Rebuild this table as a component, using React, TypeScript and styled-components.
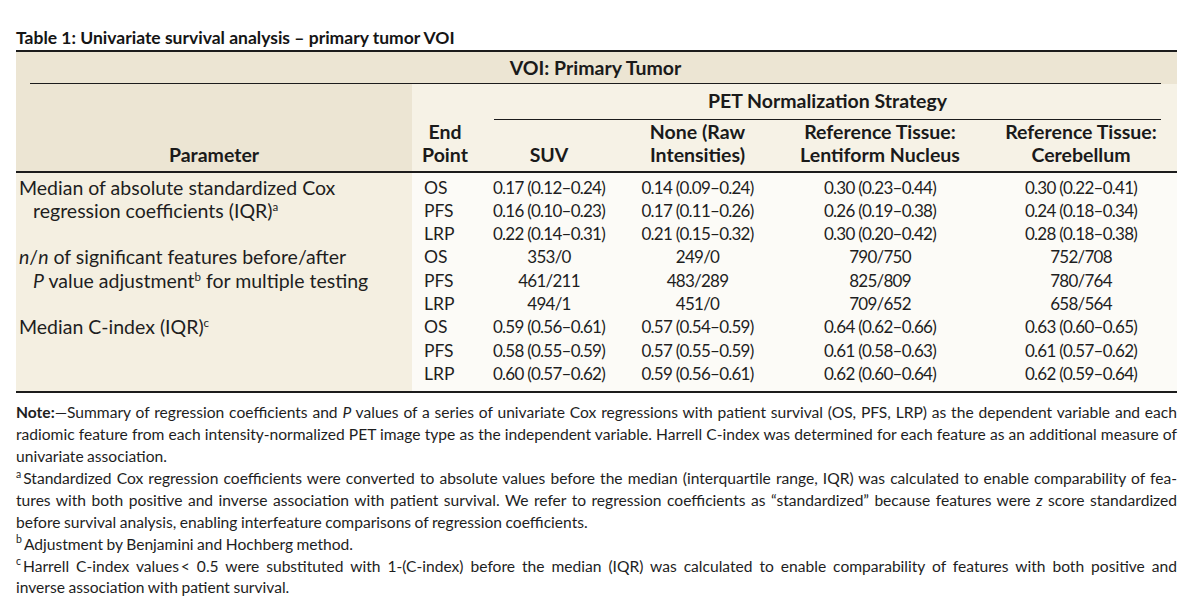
import React from "react";
import styled, { createGlobalStyle } from "styled-components";

const Global = createGlobalStyle`
  html, body { margin: 0; padding: 0; background: #ffffff; }
  body { font-family: Lato, "Noto Sans", sans-serif; color: #1e1e1e; }
`;

const Page = styled.div`
  width: 1200px;
  height: 604px;
  overflow: hidden;
  padding: 28px 0 0 16px;
  box-sizing: border-box;
`;

const Title = styled.div`
  width: 1161px;
  font-weight: 700;
  font-size: 17.5px;
  line-height: 20px;
  margin-bottom: 2px;
  color: #151515;
`;

const Table = styled.table`
  width: 1161px;
  table-layout: fixed;
  border-collapse: collapse;
  border-top: 2px solid #1c1c1c;
  border-bottom: 2.5px solid #1c1c1c;
`;

const HeadCell = styled.th<{ $bg: "dark" | "cream" }>`
  padding: 0;
  font-weight: 700;
  font-size: 19.5px;
  text-align: center;
  vertical-align: bottom;
  background: ${(p) => (p.$bg === "dark" ? "#ece5d3" : "#f6f2e6")};
  color: #1a1a1a;
`;

const GroupLabel = styled.div<{ $h: number; $inset: string }>`
  height: ${(p) => p.$h}px;
  line-height: ${(p) => p.$h}px;
  margin: ${(p) => p.$inset};
  border-bottom: 1.5px solid #1c1c1c;
`;

const ColLabel = styled.div`
  line-height: 23px;
  padding-bottom: 5px;
`;

const HeadRow = styled.tr`
  border-bottom: 2px solid #1c1c1c;
`;

const BodyRow = styled.tr<{ $first?: boolean; $last?: boolean }>`
  height: 23.3px;
  td {
    padding-top: ${(p) => (p.$first ? 3 : 0)}px;
    padding-bottom: ${(p) => (p.$last ? 6 : 0)}px;
  }
`;

const ParamCell = styled.td`
  background: #f4efe1;
  vertical-align: top;
  font-size: 19.5px;
  line-height: 23.3px;
  padding-left: 17px !important;
  text-indent: -14px;
  white-space: nowrap;
`;

const EndCell = styled.td`
  background: #fcfbf7;
  font-size: 17.5px;
  line-height: 23.3px;
  padding-left: 12px;
  text-align: left;
`;

const DataCell = styled.td`
  background: #fcfbf7;
  font-size: 17px;
  letter-spacing: -0.75px;
  line-height: 23.3px;
  text-align: center;
  white-space: nowrap;
`;

const Sup = styled.sup`
  font-size: 11.5px;
  line-height: 0;
  vertical-align: 0.6em;
`;

const Notes = styled.div`
  width: 1161px;
  margin-top: 9px;
  font-size: 15.6px;
  word-spacing: -0.5px;
  line-height: 21.9px;
  color: #1e1e1e;
`;

const Line = styled.div<{ $justify?: boolean }>`
  white-space: nowrap;
  text-align: ${(p) => (p.$justify ? "justify" : "left")};
  text-align-last: ${(p) => (p.$justify ? "justify" : "left")};
`;

const NoteSup = styled.sup`
  font-size: 10.5px;
  line-height: 0;
  vertical-align: 0.6em;
  margin-right: 2px;
`;

type Group = { param: React.ReactNode; rows: string[][] };

const groups: Group[] = [
  {
    param: (
      <>
        Median of absolute standardized Cox
        <br />
        regression coefficients (IQR)<Sup>a</Sup>
      </>
    ),
    rows: [
      ["OS", "0.17 (0.12–0.24)", "0.14 (0.09–0.24)", "0.30 (0.23–0.44)", "0.30 (0.22–0.41)"],
      ["PFS", "0.16 (0.10–0.23)", "0.17 (0.11–0.26)", "0.26 (0.19–0.38)", "0.24 (0.18–0.34)"],
      ["LRP", "0.22 (0.14–0.31)", "0.21 (0.15–0.32)", "0.30 (0.20–0.42)", "0.28 (0.18–0.38)"],
    ],
  },
  {
    param: (
      <>
        <i>n</i>/<i>n</i> of significant features before/after
        <br />
        <i>P</i> value adjustment<Sup>b</Sup> for multiple testing
      </>
    ),
    rows: [
      ["OS", "353/0", "249/0", "790/750", "752/708"],
      ["PFS", "461/211", "483/289", "825/809", "780/764"],
      ["LRP", "494/1", "451/0", "709/652", "658/564"],
    ],
  },
  {
    param: (
      <>
        Median C-index (IQR)<Sup>c</Sup>
      </>
    ),
    rows: [
      ["OS", "0.59 (0.56–0.61)", "0.57 (0.54–0.59)", "0.64 (0.62–0.66)", "0.63 (0.60–0.65)"],
      ["PFS", "0.58 (0.55–0.59)", "0.57 (0.55–0.59)", "0.61 (0.58–0.63)", "0.61 (0.57–0.62)"],
      ["LRP", "0.60 (0.57–0.62)", "0.59 (0.56–0.61)", "0.62 (0.60–0.64)", "0.62 (0.59–0.64)"],
    ],
  },
];

export default function App() {
  return (
    <>
      <Global />
      <Page>
        <Title>Table 1: Univariate survival analysis – primary tumor VOI</Title>
        <Table>
          <colgroup>
            <col style={{ width: 396 }} />
            <col style={{ width: 66 }} />
            <col style={{ width: 142 }} />
            <col style={{ width: 155 }} />
            <col style={{ width: 210 }} />
            <col style={{ width: 192 }} />
          </colgroup>
          <thead>
            <tr>
              <HeadCell $bg="dark" colSpan={6}>
                <GroupLabel $h={31} $inset="0 16px 0 14px">
                  VOI: Primary Tumor
                </GroupLabel>
              </HeadCell>
            </tr>
            <tr>
              <HeadCell $bg="dark" rowSpan={2}>
                <ColLabel>Parameter</ColLabel>
              </HeadCell>
              <HeadCell $bg="cream" rowSpan={2}>
                <ColLabel>
                  End
                  <br />
                  Point
                </ColLabel>
              </HeadCell>
              <HeadCell $bg="cream" colSpan={4}>
                <GroupLabel $h={34.5} $inset="0 16px 0 16px">
                  PET Normalization Strategy
                </GroupLabel>
              </HeadCell>
            </tr>
            <HeadRow>
              <HeadCell $bg="cream">
                <ColLabel>SUV</ColLabel>
              </HeadCell>
              <HeadCell $bg="cream">
                <ColLabel>
                  None (Raw
                  <br />
                  Intensities)
                </ColLabel>
              </HeadCell>
              <HeadCell $bg="cream">
                <ColLabel>
                  Reference Tissue:
                  <br />
                  Lentiform Nucleus
                </ColLabel>
              </HeadCell>
              <HeadCell $bg="cream">
                <ColLabel>
                  Reference Tissue:
                  <br />
                  Cerebellum
                </ColLabel>
              </HeadCell>
            </HeadRow>
          </thead>
          <tbody>
            {groups.map((g, gi) =>
              g.rows.map((r, ri) => (
                <BodyRow
                  key={`${gi}-${ri}`}
                  $first={gi === 0 && ri === 0}
                  $last={gi === groups.length - 1 && ri === g.rows.length - 1}
                >
                  {ri === 0 && <ParamCell rowSpan={3}>{g.param}</ParamCell>}
                  <EndCell>{r[0]}</EndCell>
                  {r.slice(1).map((v, vi) => (
                    <DataCell key={vi}>{v}</DataCell>
                  ))}
                </BodyRow>
              ))
            )}
          </tbody>
        </Table>
        <Notes>
          <Line $justify>
            <b>Note:</b>—Summary of regression coefficients and <i>P</i> values of a series of univariate Cox
            regressions with patient survival (OS, PFS, LRP) as the dependent variable and each
          </Line>
          <Line $justify>
            radiomic feature from each intensity-normalized PET image type as the independent variable. Harrell
            C-index was determined for each feature as an additional measure of
          </Line>
          <Line>univariate association.</Line>
          <Line $justify>
            <NoteSup>a</NoteSup>Standardized Cox regression coefficients were converted to absolute values before the
            median (interquartile range, IQR) was calculated to enable comparability of fea-
          </Line>
          <Line $justify>
            tures with both positive and inverse association with patient survival. We refer to regression
            coefficients as “standardized” because features were <i>z</i> score standardized
          </Line>
          <Line>before survival analysis, enabling interfeature comparisons of regression coefficients.</Line>
          <Line>
            <NoteSup>b</NoteSup>Adjustment by Benjamini and Hochberg method.
          </Line>
          <Line $justify>
            <NoteSup>c</NoteSup>Harrell C-index values&thinsp;&lt; 0.5 were substituted with 1-(C-index) before the
            median (IQR) was calculated to enable comparability of features with both positive and
          </Line>
          <Line>inverse association with patient survival.</Line>
        </Notes>
      </Page>
    </>
  );
}
